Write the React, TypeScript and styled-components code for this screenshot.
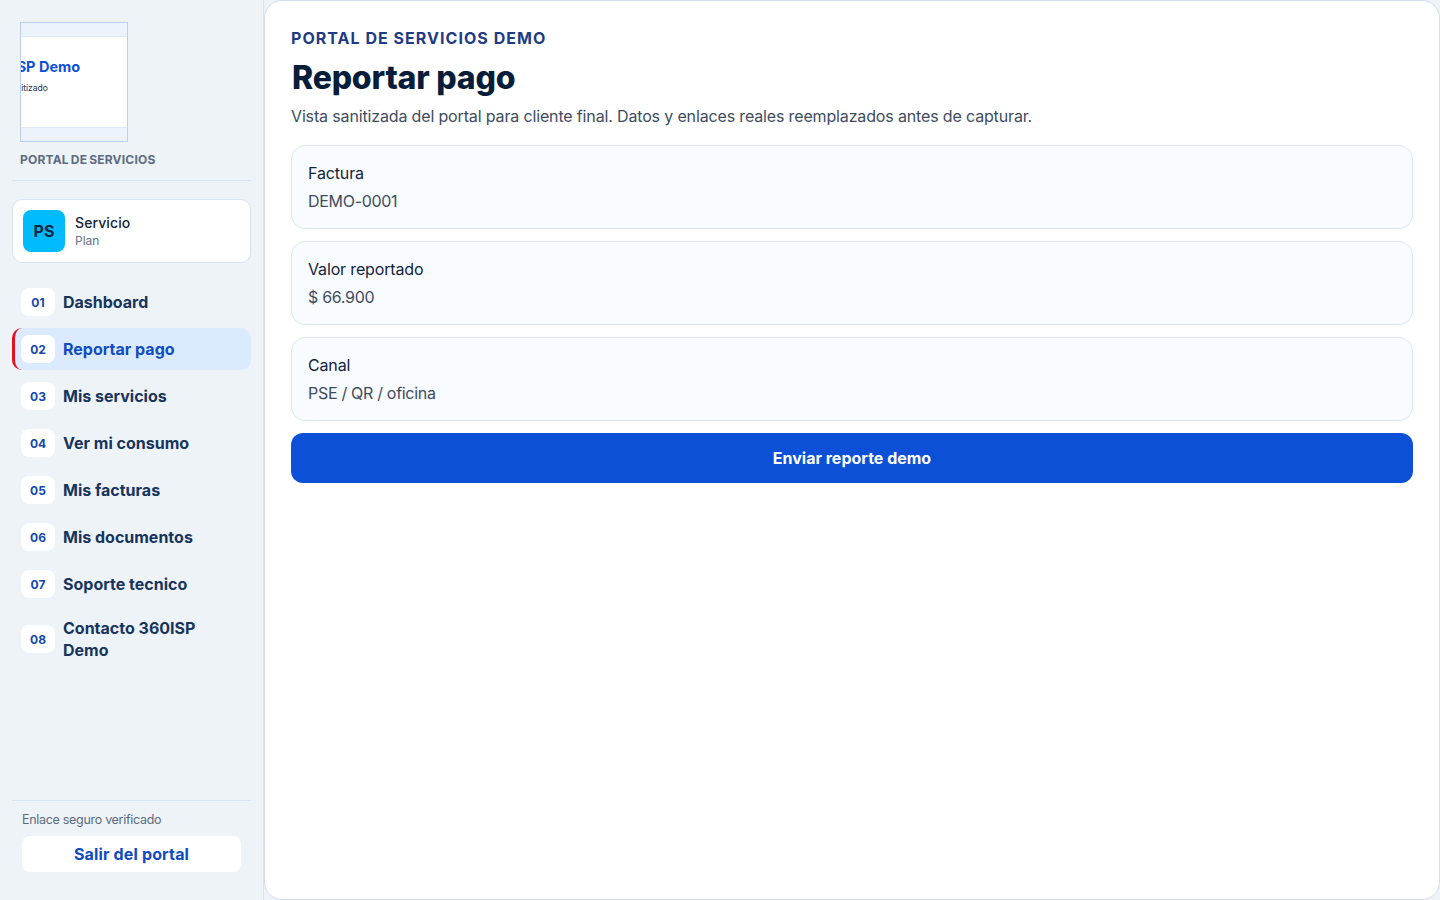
import React from "react";
import styled, { createGlobalStyle } from "styled-components";

const Global = createGlobalStyle`
  html, body { margin: 0; height: 100%; background: #eef3f8; }
  body { font-family: Inter, "Noto Sans", sans-serif; overflow: hidden; }
  #root { height: 900px; }
  * { box-sizing: border-box; }
`;

const Shell = styled.div`
  display: flex;
  width: 1440px;
  height: 900px;
  background: #eef3f8;
`;

const Sidebar = styled.aside`
  width: 264px;
  flex: none;
  display: flex;
  flex-direction: column;
  padding: 22px 12px 28px;
  border-right: 1px solid #d9e2ee;
`;

const Brand = styled.div`
  padding: 0 8px 13px;
  border-bottom: 1px solid #d8e3f2;
  margin-bottom: 18px;
`;

const Logo = styled.div`
  width: 108px;
  height: 120px;
  display: flex;
  flex-direction: column;
  border: 1px solid #bccff0;
  background: #edf3fd;
  overflow: hidden;
`;

const LogoPaper = styled.div`
  margin-top: 13px;
  height: 92px;
  flex: none;
  background: #fff;
  border-top: 1px solid #e3e9f4;
  border-bottom: 1px solid #e3e9f4;
  display: flex;
  flex-direction: column;
  padding-top: 21px;
  overflow: hidden;
`;

const LogoTitle = styled.div`
  margin-left: -37px;
  font-size: 14.5px;
  line-height: 18px;
  font-weight: 700;
  color: #0b50d6;
  white-space: nowrap;
`;

const LogoSub = styled.div`
  margin-left: -40px;
  margin-top: 6px;
  font-size: 8.5px;
  line-height: 12px;
  color: #20304a;
  white-space: nowrap;
`;

const BrandCaption = styled.div`
  margin-top: 10px;
  font-size: 12px;
  line-height: 15px;
  font-weight: 700;
  letter-spacing: 0.2px;
  word-spacing: -1px;
  color: #5c6b80;
`;

const ServiceCard = styled.div`
  height: 64px;
  display: flex;
  align-items: center;
  gap: 10px;
  padding: 0 10px;
  background: #fff;
  border: 1px solid #d8e3f2;
  border-radius: 10px;
  margin-bottom: 18px;
`;

const ServiceBadge = styled.div`
  width: 42px;
  height: 42px;
  border-radius: 8px;
  background: #00bcff;
  color: #0a2540;
  font-size: 16px;
  font-weight: 700;
  display: flex;
  align-items: center;
  justify-content: center;
`;

const ServiceText = styled.div`
  display: flex;
  flex-direction: column;
  padding-top: 1px;
`;

const ServiceName = styled.div`
  font-size: 14px;
  line-height: 18px;
  font-weight: 500;
  letter-spacing: 0.1px;
  color: #12233d;
`;

const ServicePlan = styled.div`
  margin-top: 1px;
  font-size: 12px;
  line-height: 16px;
  color: #66758a;
`;

const Nav = styled.nav`
  display: flex;
  flex-direction: column;
  gap: 5px;
`;

const NavItem = styled.div<{ $active?: boolean }>`
  min-height: 42px;
  padding: 7px 9px 7px ${(p) => (p.$active ? "6px" : "9px")};
  display: flex;
  align-items: center;
  gap: 8px;
  border-radius: 10px;
  font-size: 16px;
  line-height: 22px;
  font-weight: 700;
  letter-spacing: 0;
  color: ${(p) => (p.$active ? "#0f4cc2" : "#17345c")};
  background: ${(p) => (p.$active ? "#dbeafe" : "transparent")};
  border-left: ${(p) => (p.$active ? "3px solid #e0131f" : "0 solid transparent")};
`;

const NavNum = styled.span`
  width: 34px;
  height: 28px;
  flex: none;
  padding-top: 1px;
  border-radius: 8px;
  background: #fff;
  color: #1447b0;
  font-size: 12px;
  font-weight: 700;
  display: flex;
  align-items: center;
  justify-content: center;
`;

const NavLabel = styled.span`
  max-width: 170px;
`;

const SideFoot = styled.div`
  margin-top: auto;
  border-top: 1px solid #d8e3f2;
  padding: 10px 10px 0;
`;

const SecureNote = styled.div`
  font-size: 12.5px;
  line-height: 18px;
  color: #5c6b80;
  letter-spacing: -0.3px;
  margin-bottom: 7px;
`;

const ExitButton = styled.div`
  height: 36px;
  border-radius: 8px;
  background: #fff;
  color: #0f4cc2;
  font-size: 16px;
  font-weight: 700;
  letter-spacing: 0.15px;
  display: flex;
  align-items: center;
  justify-content: center;
`;

const Main = styled.main`
  flex: 1;
  height: 900px;
  background: #fff;
  border: 1px solid #d4deeb;
  border-radius: 18px;
  padding: 27px 26px 0;
`;

const Eyebrow = styled.div`
  font-size: 16px;
  line-height: 20px;
  font-weight: 700;
  letter-spacing: 1.03px;
  color: #1f3b85;
`;

const Title = styled.h1`
  margin: 8px 0 0;
  padding-left: 1px;
  font-size: 32px;
  line-height: 44px;
  font-weight: 800;
  letter-spacing: -0.2px;
  color: #071d3a;
`;

const Lead = styled.p`
  margin: 4px 0 0;
  font-size: 16px;
  line-height: 24px;
  letter-spacing: -0.15px;
  color: #3e4c60;
`;

const Fields = styled.div`
  margin-top: 17px;
  display: flex;
  flex-direction: column;
  gap: 12px;
`;

const FieldCard = styled.div`
  height: 84px;
  padding: 15px 16px 0;
  background: #f8fbff;
  border: 1px solid #dbe5f3;
  border-radius: 14px;
`;

const FieldLabel = styled.div`
  font-size: 16px;
  line-height: 24px;
  color: #12233d;
  letter-spacing: -0.15px;
`;

const FieldValue = styled.div`
  margin-top: 4px;
  font-size: 16px;
  line-height: 24px;
  color: #3e4c60;
  letter-spacing: -0.3px;
`;

const Submit = styled.button`
  display: block;
  width: 100%;
  height: 50px;
  margin-top: 12px;
  border: 0;
  border-radius: 12px;
  background: #0b50d6;
  color: #fff;
  font-family: inherit;
  font-size: 16px;
  font-weight: 700;
  letter-spacing: 0;
`;

const items = [
  "Dashboard",
  "Reportar pago",
  "Mis servicios",
  "Ver mi consumo",
  "Mis facturas",
  "Mis documentos",
  "Soporte tecnico",
  "Contacto 360ISP Demo",
];

const fields = [
  ["Factura", "DEMO-0001"],
  ["Valor reportado", "$ 66.900"],
  ["Canal", "PSE / QR / oficina"],
];

export default function App() {
  return (
    <Shell>
      <Global />
      <Sidebar>
        <Brand>
          <Logo>
            <LogoPaper>
              <LogoTitle>360ISP Demo</LogoTitle>
              <LogoSub>Portal sanitizado</LogoSub>
            </LogoPaper>
          </Logo>
          <BrandCaption>PORTAL DE SERVICIOS</BrandCaption>
        </Brand>
        <ServiceCard>
          <ServiceBadge>PS</ServiceBadge>
          <ServiceText>
            <ServiceName>Servicio</ServiceName>
            <ServicePlan>Plan</ServicePlan>
          </ServiceText>
        </ServiceCard>
        <Nav>
          {items.map((label, i) => (
            <NavItem key={label} $active={i === 1}>
              <NavNum>{String(i + 1).padStart(2, "0")}</NavNum>
              <NavLabel>{label}</NavLabel>
            </NavItem>
          ))}
        </Nav>
        <SideFoot>
          <SecureNote>Enlace seguro verificado</SecureNote>
          <ExitButton>Salir del portal</ExitButton>
        </SideFoot>
      </Sidebar>
      <Main>
        <Eyebrow>PORTAL DE SERVICIOS DEMO</Eyebrow>
        <Title>Reportar pago</Title>
        <Lead>Vista sanitizada del portal para cliente final. Datos y enlaces reales reemplazados antes de capturar.</Lead>
        <Fields>
          {fields.map(([label, value]) => (
            <FieldCard key={label}>
              <FieldLabel>{label}</FieldLabel>
              <FieldValue>{value}</FieldValue>
            </FieldCard>
          ))}
        </Fields>
        <Submit>Enviar reporte demo</Submit>
      </Main>
    </Shell>
  );
}
